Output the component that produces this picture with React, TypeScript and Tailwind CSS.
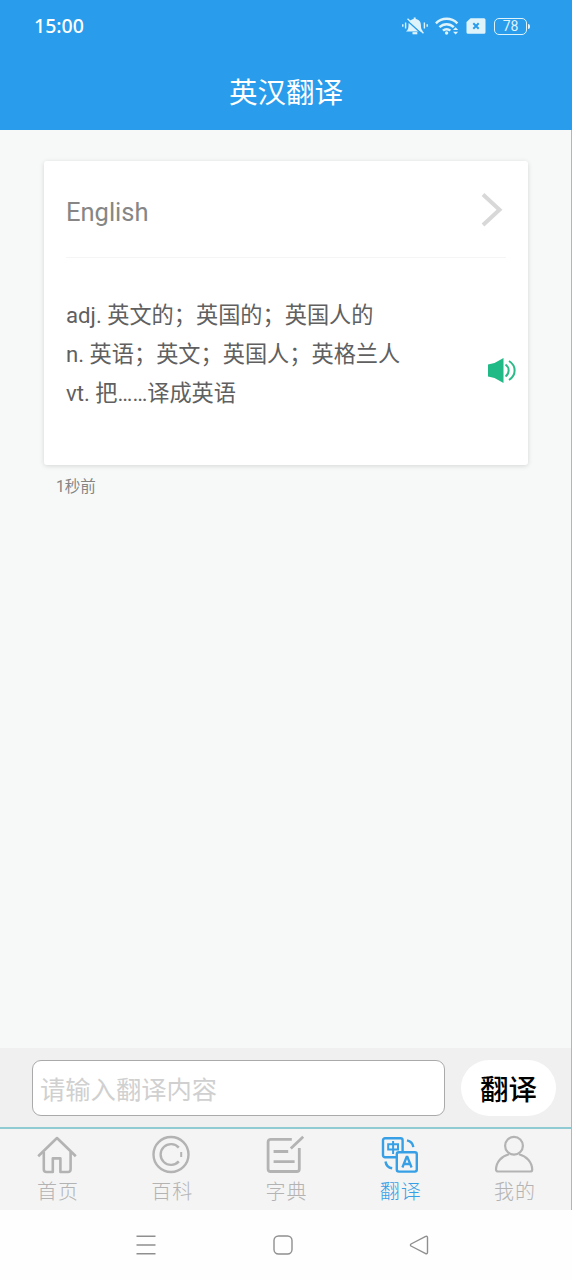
import React from "react";

interface Tab {
  label: string;
  icon: React.ReactNode;
  active?: boolean;
}

const HomeIcon = () => (
  <svg width="40" height="40" viewBox="0 0 40 40" fill="none" stroke="currentColor" strokeWidth="2.6" strokeLinejoin="round">
    <path d="M1.2 21.2 20 3l18.8 18.2" />
    <path d="M6.8 17v17.2a2.8 2.8 0 0 0 2.8 2.8h6.2V23.4h7.6V37h7.4a2.8 2.8 0 0 0 2.8-2.8V17" />
  </svg>
);

const WikiIcon = () => (
  <svg width="40" height="40" viewBox="0 0 40 40" fill="none" stroke="currentColor" strokeWidth="2.4">
    <circle cx="20" cy="19.5" r="17.5" />
    <path d="M27.8 12.6A10.4 10.4 0 1 0 27.8 26.4" />
    <path d="M30.2 17v5" strokeWidth="2" />
  </svg>
);

const DictionaryIcon = () => (
  <svg width="40" height="40" viewBox="0 0 40 40" fill="none" stroke="currentColor" strokeWidth="2.8">
    <path d="M26.8 4.3H5.7a2.6 2.6 0 0 0-2.6 2.6v27a2.6 2.6 0 0 0 2.6 2.6h26a2.6 2.6 0 0 0 2.6-2.6V13" />
    <path d="M25.8 13.5 38.2 1.8" />
    <path d="M8.6 16.5h14.6M8.6 26.6h21" />
  </svg>
);

const TranslateIcon = () => (
  <svg width="40" height="40" viewBox="0 0 40 40" fill="none" stroke="currentColor" strokeWidth="2.4">
    <path d="M16.5 22.2H5a2 2 0 0 1-2-2V5.2a2 2 0 0 1 2-2h15.6a2 2 0 0 1 2 2V17" />
    <rect x="16.8" y="17.2" width="20" height="19.4" rx="2" />
    <path d="M8.2 9.2h9.8v5.4H8.2zM13.1 6v13" strokeWidth="2" />
    <path d="m22.4 32.5 4.2-10.500h.8l4.200 10.500M24 29h6" strokeWidth="2.3" />
    <path d="M27 5.3a8 8 0 0 1 6.3 6.800M5.500 26.500a8 8 0 0 0 6.700 6.800" />
  </svg>
);

const ProfileIcon = () => (
  <svg width="40" height="40" viewBox="0 0 40 40" fill="none" stroke="currentColor" strokeWidth="2.2">
    <circle cx="20" cy="10.8" r="8.9" />
    <path d="M15 19.2C7.5 21 2.3 27 2 34.4a2.1 2.1 0 0 0 2.1 2.1h32a2.1 2.1 0 0 0 2.1-2.1C37.900 27 32.500 21 25 19.200" />
  </svg>
);

const tabs: Tab[] = [
  { label: "首页", icon: <HomeIcon /> },
  { label: "百科", icon: <WikiIcon /> },
  { label: "字典", icon: <DictionaryIcon /> },
  { label: "翻译", icon: <TranslateIcon />, active: true },
  { label: "我的", icon: <ProfileIcon /> },
];

const definitions = [
  "adj. 英文的；英国的；英国人的",
  "n. 英语；英文；英国人；英格兰人",
  "vt. 把……译成英语",
];

const StatusBar = () => (
  <div className="h-[52px] pl-[34px] pr-[42px] flex items-center justify-between">
    <span className="font-['Noto_Sans','Noto_Sans_CJK_SC',sans-serif] font-medium text-[19.5px] leading-none">
      15:00
    </span>
    <div className="flex items-center text-[#dff3fb]">
      {/* Muted bell */}
      <svg width="28" height="20" viewBox="0 0 28 20" fill="none" stroke="currentColor" strokeWidth="1.4">
        <path d="M5 15.500c2.200-1.500 2.500-3.500 2.500-6.500 0-3.400 2-5.700 5.200-6.100V1.500h2v1.400c3.200.4 5.200 2.700 5.200 6.100 0 3 .3 5 2.500 6.500z" fill="currentColor" stroke="none" />
        <path d="M11.500 17.200h4.800" strokeWidth="2.200" />
        <path d="m5.500 4 15.500 14" stroke="#299CEC" strokeWidth="1.500" />
        <path d="m6.500 2.800 16 14.500" />
        <path d="M4.600 6.500v6M1.800 8.300v2.400M23.400 6.500v6M26.200 8.300v2.400" />
      </svg>
      {/* Wifi */}
      <svg className="ml-1.5" width="25" height="20" viewBox="0 0 25 20" fill="none" stroke="currentColor" strokeWidth="2.4">
        <path d="M.9 7.300c6-6 15.500-6 21.500 0M4.500 11.200c4-4 10.300-4 14.300 0M8 14.700c2-2 5.300-2 7.300 0" />
        <circle cx="11.6" cy="17" r="1.7" fill="currentColor" stroke="none" />
        <path d="m18 14 2.600-2.800 2.600 2.800zM18 15.800l2.600 2.800 2.600-2.800z" fill="currentColor" stroke="none" />
      </svg>
      {/* Missing SIM */}
      <svg className="ml-[6px]" width="20" height="16" viewBox="0 0 20 16">
        <path d="M4.500.3H18A1.500 1.500 0 0 1 19.500 1.800v12.400a1.500 1.500 0 0 1-1.500 1.500H2A1.500 1.500 0 0 1 .5 14.200V4z" fill="currentColor" />
        <path d="m7.300 5.300 5.400 5.400M12.700 5.300l-5.400 5.400" stroke="#299CEC" strokeWidth="2" />
      </svg>
      <div className="ml-2 w-[33px] h-[17px] border-[1.5px] border-current rounded-[5px] flex items-center justify-center font-[Roboto] text-[14px] leading-none">
        78
      </div>
      <div className="ml-px w-[2px] h-[5px] bg-current rounded-r" />
    </div>
  </div>
);

const ResultCard = () => (
  <div className="ml-11 mr-[43px] h-[304px] bg-white rounded-[3px] shadow-[0_1px_5px_rgba(0,0,0,0.14)]">
    <div className="mx-[22px] h-[97px] border-b border-[#f5f5f5] flex items-center justify-between">
      <span className="pt-[7px] text-[25.5px] leading-none text-[#868686]">English</span>
      <svg className="mr-[3px] mt-[2px]" width="22" height="36" viewBox="0 0 22 36" fill="none" stroke="#d8d8d8" strokeWidth="4">
        <path d="m2 2.500 16.500 15.200L2 33" />
      </svg>
    </div>
    <div className="pl-[22px] pr-[11px] pt-[38px] flex justify-between">
      <div className="text-[22.2px] leading-[39px] text-[#606060] whitespace-nowrap">
        {definitions.map((line) => (
          <p key={line}>{line}</p>
        ))}
      </div>
      <svg className="mt-[60px]" width="30" height="28" viewBox="0 0 30 28" fill="none" stroke="#2cba88" strokeWidth="2">
        <path d="M1 8.500 7.500 7 16.500 2v25L7.500 22 1 20.500z" fill="#1fba86" stroke="none" />
        <path d="M18.500 8.500c4.200 3 4.200 9 0 12" />
        <path d="M22 5c7.500 4.800 7.500 14.200 0 19" />
      </svg>
    </div>
  </div>
);

export default function App() {
  return (
    <div className="w-[572px] h-[1280px] flex flex-col overflow-hidden bg-[#fefefe] font-[Roboto,'Noto_Sans_CJK_SC',sans-serif]">
      <header className="h-[130px] bg-[#299cec] text-white">
        <StatusBar />
        <h1 className="h-[78px] pt-[7px] flex items-center justify-center text-[28.5px] leading-none">
          英汉翻译
        </h1>
      </header>

      <div className="h-[1080px] flex flex-col border-r border-[#b4b6b6]">
        <main className="h-[918px] pt-[31px] bg-[#f7f9f8]">
          <ResultCard />
          <p className="mt-[10px] ml-14 text-[15.6px] leading-6 text-[#858585]">1秒前</p>
        </main>

        {/* Input bar */}
        <div className="h-[79px] pl-8 pr-[15px] flex items-center justify-between bg-[#f0f0f0]">
          <input
            className="w-[413px] h-14 px-[7px] pt-1.5 bg-white border border-[#aaa] rounded-[9px] text-[25.3px] placeholder:text-[#d0d0d0] outline-none"
            placeholder="请输入翻译内容"
          />
          <button className="w-[95px] h-14 pt-[7px] rounded-full bg-white text-[28.5px] leading-none font-medium text-black">
            翻译
          </button>
        </div>

        {/* Tabs */}
        <nav className="h-[83px] border-t-2 border-[#90cad2] bg-[#f4f4f4] grid grid-cols-5">
          {tabs.map((tab) => (
            <div
              key={tab.label}
              className={`flex flex-col items-center pt-[6px] ${tab.active ? "text-[#369fe6]" : "text-[#b3b3b3]"}`}
            >
              {tab.icon}
              <span className="mt-[7px] pl-[2px] text-[20px] leading-5 tracking-[1px] font-light">{tab.label}</span>
            </div>
          ))}
        </nav>
      </div>

      {/* System navigation */}
      <div className="h-[70px] pl-[136px] flex items-center gap-[116.5px] text-[#8f8f8f]">
        <svg width="20" height="20" viewBox="0 0 20 20" fill="none" stroke="currentColor" strokeWidth="1.4">
          <path d="M.5 1.300h19M.5 10h19M.5 18.700h19" />
        </svg>
        <svg width="20" height="20" viewBox="0 0 20 20" fill="none" stroke="currentColor" strokeWidth="1.4">
          <rect x="1" y="1" width="18" height="18" rx="4.5" />
        </svg>
        <svg width="20" height="20" viewBox="0 0 20 20" fill="none" stroke="currentColor" strokeWidth="1.4" strokeLinejoin="round">
          <path d="M16.700 1.400 2 9a1.200 1.200 0 0 0 0 2l14.700 7.600a1.200 1.200 0 0 0 1.800-1V2.400a1.200 1.200 0 0 0-1.800-1z" />
        </svg>
      </div>
    </div>
  );
}
